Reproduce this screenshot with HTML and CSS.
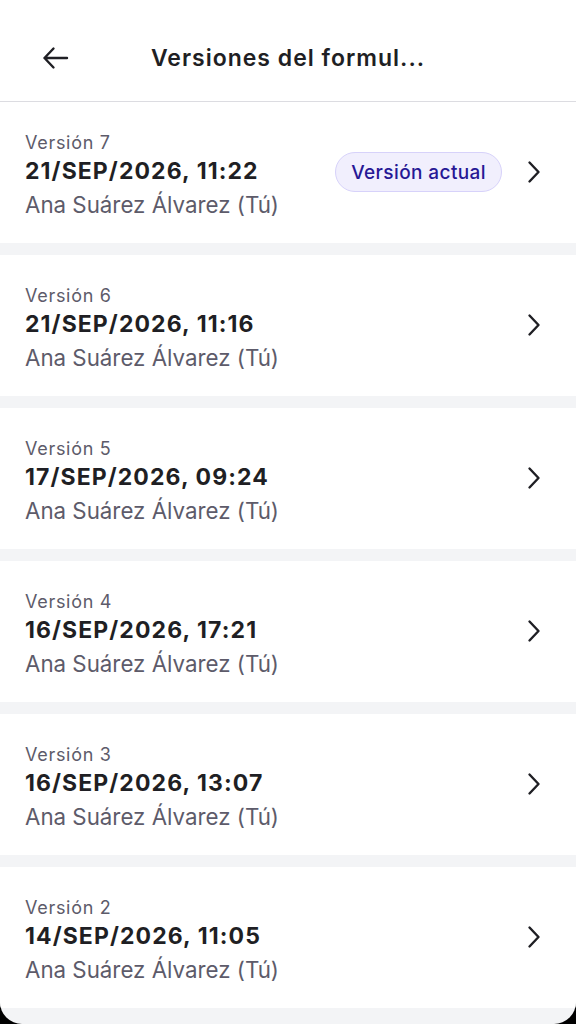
FILE: index.html
```html
<!DOCTYPE html>
<html lang="es">
<head>
<meta charset="utf-8">
<title>Versiones del formulario</title>
<link rel="stylesheet" href="styles.css">
</head>
<body>
<div class="app">
  <header class="topbar">
    <button class="back" aria-label="Volver">
      <svg width="28" height="28" viewBox="0 0 28 28" fill="none" stroke="#1f1f24" stroke-width="2.4" stroke-linecap="round" stroke-linejoin="round"><path d="M26 14H3.5M12.5 4.5L3.5 14l9 9.5"/></svg>
    </button>
    <h1 class="title">Versiones del formul...</h1>
  </header>
  <main class="list">
    <a class="card">
      <div class="info">
        <div class="label">Versión 7</div>
        <div class="date">21/SEP/2026, 11:22</div>
        <div class="author">Ana Suárez Álvarez (Tú)</div>
      </div>
      <span class="badge">Versión actual</span>
      <svg class="chev" width="14" height="24" viewBox="0 0 14 24" fill="none" stroke="#1f1f24" stroke-width="2.4" stroke-linecap="round" stroke-linejoin="round"><path d="M2.5 2.5L11.5 12l-9 9.5"/></svg>
    </a>
    <a class="card">
      <div class="info">
        <div class="label">Versión 6</div>
        <div class="date">21/SEP/2026, 11:16</div>
        <div class="author">Ana Suárez Álvarez (Tú)</div>
      </div>
      <svg class="chev" width="14" height="24" viewBox="0 0 14 24" fill="none" stroke="#1f1f24" stroke-width="2.4" stroke-linecap="round" stroke-linejoin="round"><path d="M2.5 2.5L11.5 12l-9 9.5"/></svg>
    </a>
    <a class="card">
      <div class="info">
        <div class="label">Versión 5</div>
        <div class="date">17/SEP/2026, 09:24</div>
        <div class="author">Ana Suárez Álvarez (Tú)</div>
      </div>
      <svg class="chev" width="14" height="24" viewBox="0 0 14 24" fill="none" stroke="#1f1f24" stroke-width="2.4" stroke-linecap="round" stroke-linejoin="round"><path d="M2.5 2.5L11.5 12l-9 9.5"/></svg>
    </a>
    <a class="card">
      <div class="info">
        <div class="label">Versión 4</div>
        <div class="date">16/SEP/2026, 17:21</div>
        <div class="author">Ana Suárez Álvarez (Tú)</div>
      </div>
      <svg class="chev" width="14" height="24" viewBox="0 0 14 24" fill="none" stroke="#1f1f24" stroke-width="2.4" stroke-linecap="round" stroke-linejoin="round"><path d="M2.5 2.5L11.5 12l-9 9.5"/></svg>
    </a>
    <a class="card">
      <div class="info">
        <div class="label">Versión 3</div>
        <div class="date">16/SEP/2026, 13:07</div>
        <div class="author">Ana Suárez Álvarez (Tú)</div>
      </div>
      <svg class="chev" width="14" height="24" viewBox="0 0 14 24" fill="none" stroke="#1f1f24" stroke-width="2.4" stroke-linecap="round" stroke-linejoin="round"><path d="M2.5 2.5L11.5 12l-9 9.5"/></svg>
    </a>
    <a class="card">
      <div class="info">
        <div class="label">Versión 2</div>
        <div class="date">14/SEP/2026, 11:05</div>
        <div class="author">Ana Suárez Álvarez (Tú)</div>
      </div>
      <svg class="chev" width="14" height="24" viewBox="0 0 14 24" fill="none" stroke="#1f1f24" stroke-width="2.4" stroke-linecap="round" stroke-linejoin="round"><path d="M2.5 2.5L11.5 12l-9 9.5"/></svg>
    </a>
  </main>
</div>
</body>
</html>
```

FILE: styles.css
```css
* { box-sizing: border-box; }
html { background: #000; }
body {
  margin: 0;
  font-family: Inter, "Noto Sans", "Liberation Sans", sans-serif;
  color: #1f1f24;
}
.app {
  height: 1024px;
  overflow: hidden;
  background: #f3f4f6;
  border-radius: 0 0 22px 22px;
}
.topbar {
  height: 102px;
  background: #fff;
  border-bottom: 1px solid #dcdce1;
  display: flex;
  align-items: center;
  justify-content: center;
  position: relative;
  padding-top: 14px;
}
.back {
  position: absolute;
  left: 41px;
  top: 44px;
  width: 28px;
  height: 28px;
  padding: 0;
  border: 0;
  background: none;
  display: flex;
}
.title {
  margin: 0;
  font-size: 23px;
  font-weight: 600;
  letter-spacing: 1px;
  color: #1f1f24;
}
.list {
  display: flex;
  flex-direction: column;
  gap: 12.5px;
}
.card {
  height: 140.5px;
  background: #fff;
  display: flex;
  align-items: center;
  padding: 0 35px 0 25px;
}
.info {
  flex: 1;
  align-self: stretch;
  display: flex;
  flex-direction: column;
  padding-top: 30px;
}
.label {
  font-size: 18px;
  line-height: 22px;
  letter-spacing: 0.7px;
  color: #5d5b6a;
}
.date {
  font-size: 23px;
  line-height: 30px;
  font-weight: 650;
  letter-spacing: 1.1px;
  margin-top: 2px;
  color: #1f1f24;
}
.author {
  font-size: 22.3px;
  line-height: 28px;
  margin-top: 5px;
  color: #5d5b6a;
}
.badge {
  height: 40px;
  padding: 0 15px;
  border-radius: 20px;
  background: #f1effd;
  border: 1px solid #d7d2fa;
  color: #271895;
  font-size: 19px;
  font-weight: 550;
  letter-spacing: 0.4px;
  display: flex;
  align-items: center;
  margin-right: 25px;
}
.chev { flex: none; }
```
